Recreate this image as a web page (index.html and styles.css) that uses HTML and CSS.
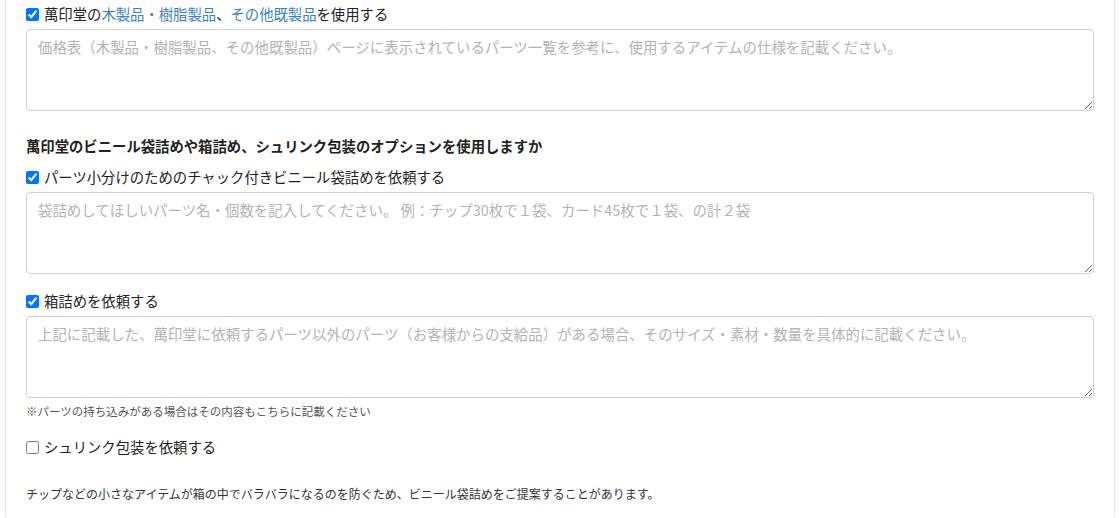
FILE: index.html
```html
<!DOCTYPE html>
<html lang="ja">
<head>
<meta charset="utf-8">
<link rel="stylesheet" href="styles.css">
</head>
<body>
<div class="card">
  <label class="check first"><input type="checkbox" checked><span>萬印堂の<span class="link">木製品・樹脂製品</span>、<span class="link">その他既製品</span>を使用する</span></label>
  <textarea class="field" placeholder="価格表（木製品・樹脂製品、その他既製品）ページに表示されているパーツ一覧を参考に、使用するアイテムの仕様を記載ください。"></textarea>

  <div class="heading">萬印堂のビニール袋詰めや箱詰め、シュリンク包装のオプションを使用しますか</div>

  <label class="check after-heading"><input type="checkbox" checked><span>パーツ小分けのためのチャック付きビニール袋詰めを依頼する</span></label>
  <textarea class="field" placeholder="袋詰めしてほしいパーツ名・個数を記入してください。 例：チップ30枚で１袋、カード45枚で１袋、の計２袋"></textarea>

  <label class="check after-field"><input type="checkbox" checked><span>箱詰めを依頼する</span></label>
  <textarea class="field" placeholder="上記に記載した、萬印堂に依頼するパーツ以外のパーツ（お客様からの支給品）がある場合、そのサイズ・素材・数量を具体的に記載ください。"></textarea>
  <p class="note">※パーツの持ち込みがある場合はその内容もこちらに記載ください</p>

  <label class="check after-note"><input type="checkbox"><span>シュリンク包装を依頼する</span></label>

  <p class="info">チップなどの小さなアイテムが箱の中でバラバラになるのを防ぐため、ビニール袋詰めをご提案することがあります。</p>
</div>
</body>
</html>
```
FILE: styles.css
```css
html, body {
  margin: 0;
  padding: 0;
  background: #fff;
}
body {
  font-family: "Noto Sans CJK JP", "Noto Sans", sans-serif;
  color: #222;
  overflow: hidden;
}
.card {
  margin-left: 5px;
  width: 1110px;
  box-sizing: border-box;
  border-left: 1px solid #e3e3e3;
  border-right: 1px solid #e3e3e3;
  padding: 4px 20px 14px 20px;
}
.check {
  display: flex;
  align-items: center;
  height: 20px;
  font-size: 14.35px;
  line-height: 20px;
  color: #222;
}
.check input {
  width: 13px;
  height: 13px;
  margin: 0 5px 0 0;
  flex: none;
}
.link {
  color: #3a7fcc;
}
.field {
  display: block;
  width: 100%;
  height: 82px;
  box-sizing: border-box;
  margin: 5px 0 0 0;
  padding: 6px 11px;
  border: 1px solid #cfcfcf;
  border-radius: 4px;
  font-family: "Noto Sans CJK JP", "Noto Sans", sans-serif;
  font-size: 14.45px;
  line-height: 21px;
  color: #333;
  background: #fff;
}
.field::placeholder {
  color: #b3b3b3;
}
.heading {
  margin-top: 25px;
  font-size: 14.35px;
  line-height: 20px;
  font-weight: bold;
  color: #222;
}
.after-heading {
  margin-top: 11px;
}
.after-field {
  margin-top: 17px;
}
.note {
  margin: 4px 0 0 0;
  font-size: 11.5px;
  line-height: 18px;
  color: #555;
}
.after-note {
  margin-top: 17px;
}
.info {
  margin: 28px 0 0 0;
  font-size: 12px;
  line-height: 18px;
  color: #333;
}
```
